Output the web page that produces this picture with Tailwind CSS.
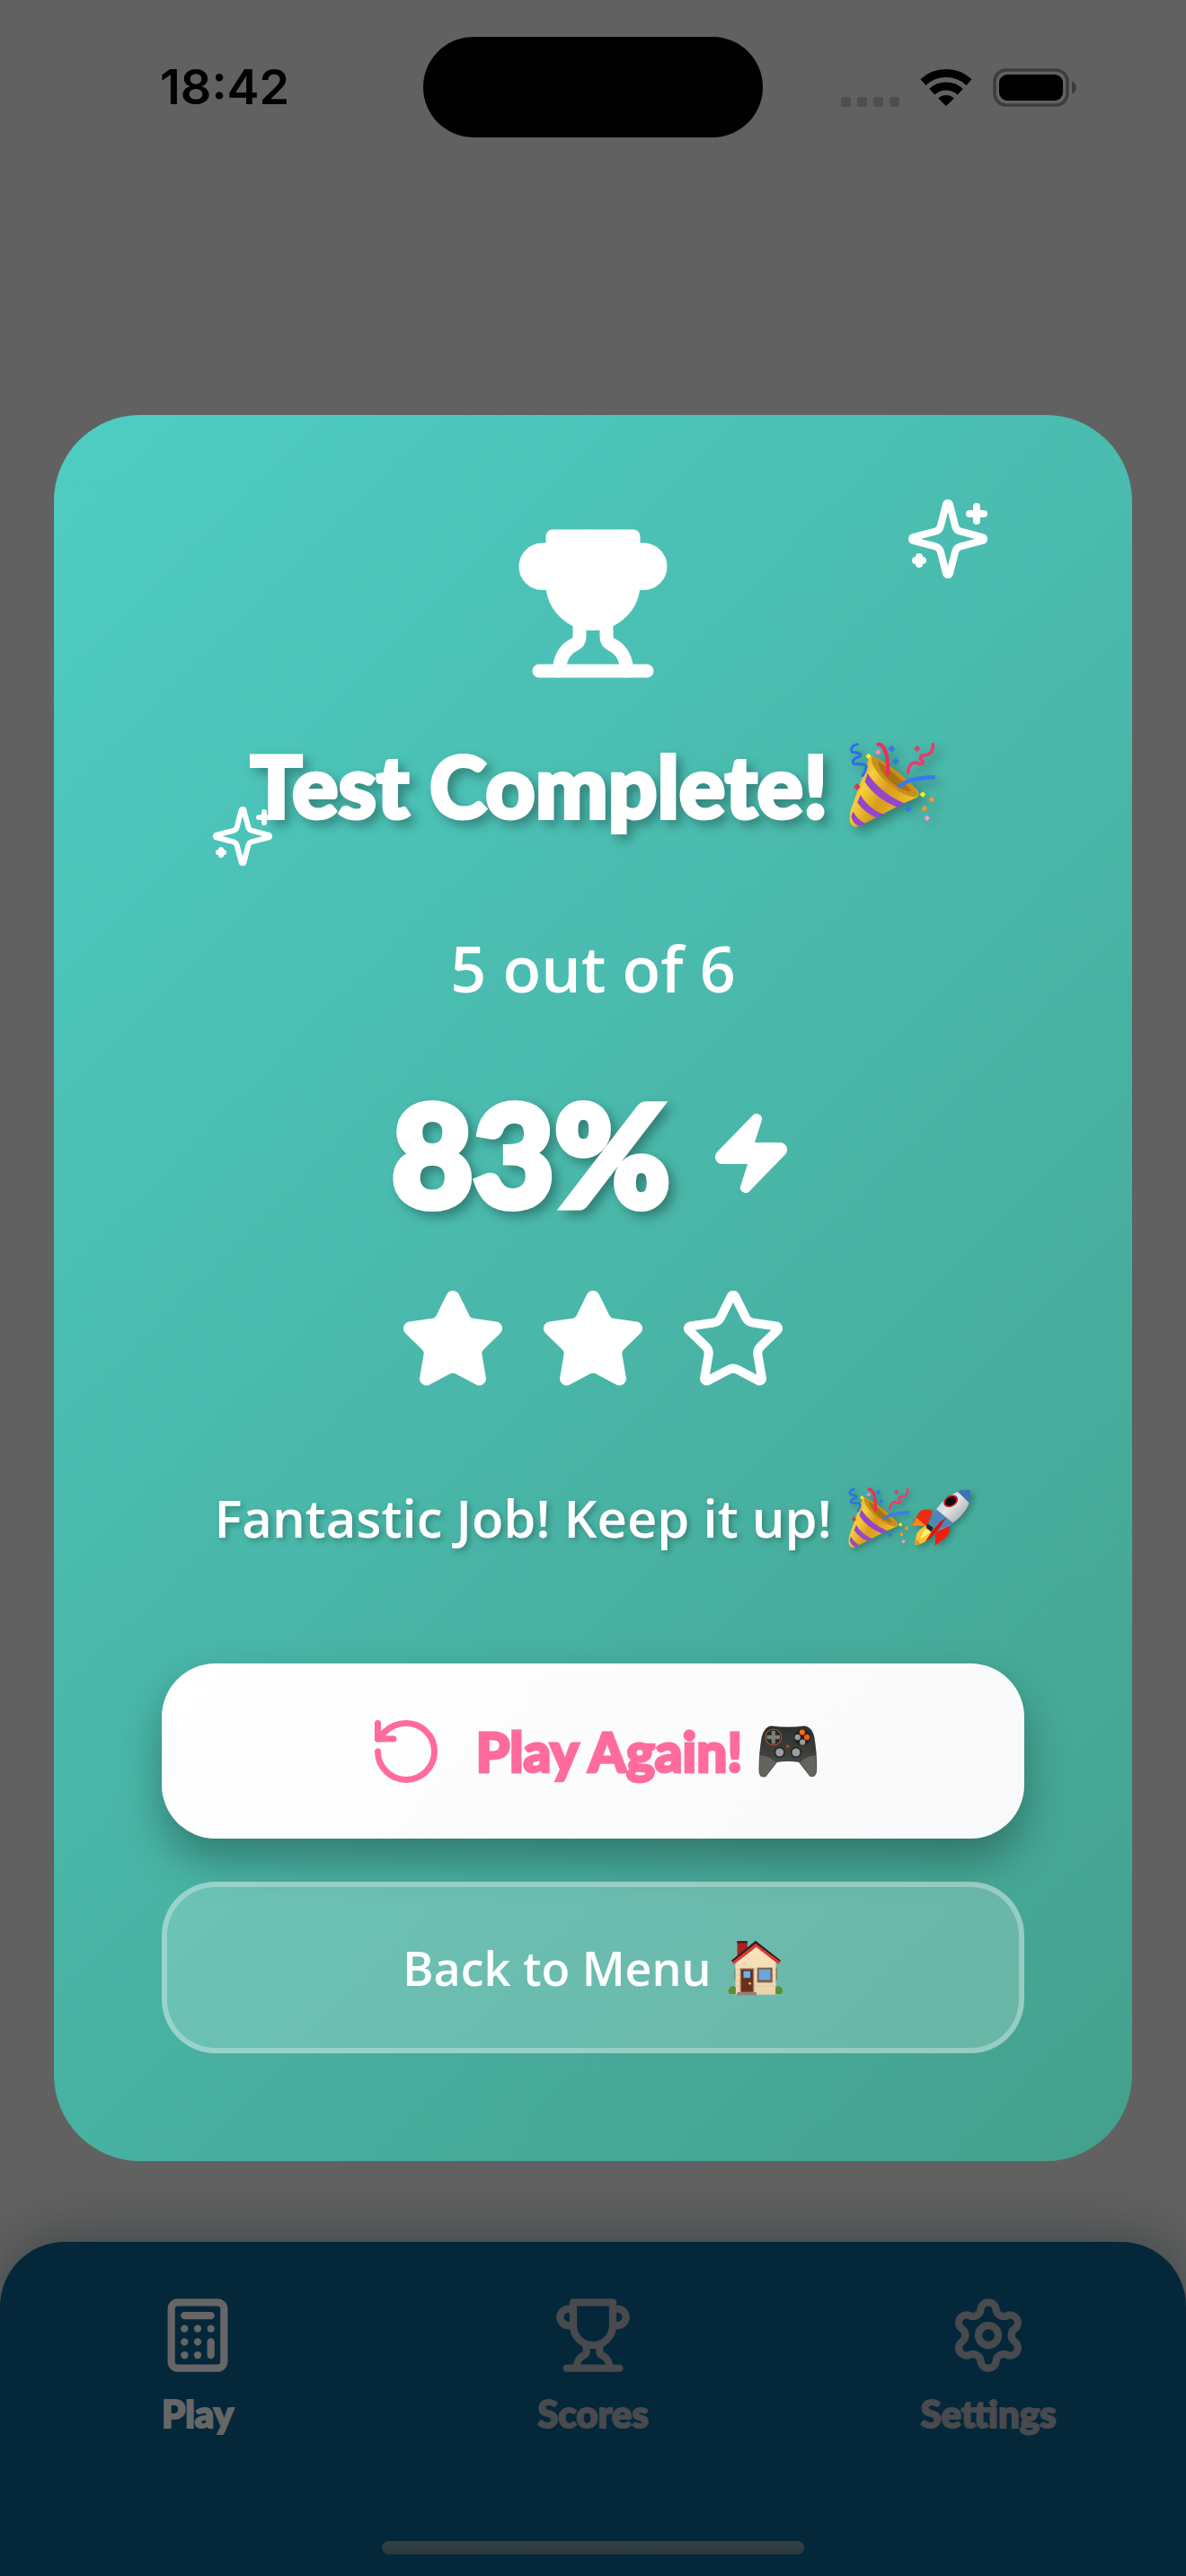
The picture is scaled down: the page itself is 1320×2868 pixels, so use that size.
<!DOCTYPE html>
<html lang="en">
<head>
<meta charset="utf-8">
<meta name="viewport" content="width=device-width, initial-scale=1">
<title>Test Complete</title>
<script src="https://cdn.jsdelivr.net/npm/@tailwindcss/browser@4"></script>
</head>
<body class="relative flex min-h-screen flex-col bg-[#f3f3f3] font-['Open_Sans',sans-serif]">

<!-- Shared symbols -->
<svg class="absolute size-0" aria-hidden="true">
  <defs>
    <linearGradient id="gold" x1="0" y1="0" x2="1" y2=".6"><stop offset="0" stop-color="#c98a12"/><stop offset=".35" stop-color="#f7cf3a"/><stop offset=".6" stop-color="#d99c1c"/><stop offset="1" stop-color="#f3c22e"/></linearGradient>
    <linearGradient id="steel" x1="0" y1="0" x2="1" y2="1"><stop offset="0" stop-color="#8fb4d8"/><stop offset=".45" stop-color="#e4e6e8"/><stop offset="1" stop-color="#7c8288"/></linearGradient>
    <linearGradient id="pad" x1="0" y1="0" x2="0" y2="1"><stop offset="0" stop-color="#2b302e"/><stop offset=".55" stop-color="#3d403c"/><stop offset="1" stop-color="#565852"/></linearGradient>
    <linearGradient id="wall" x1="0" y1="0" x2="0" y2="1"><stop offset="0" stop-color="#fde6bf"/><stop offset="1" stop-color="#ead3ac"/></linearGradient>
    <symbol id="trophy" viewBox="0 0 24 24">
      <path d="M6 9H4.500a2.500 2.500 0 0 1 0-5H6"/><path d="M18 9h1.500a2.500 2.500 0 0 0 0-5H18"/><path d="M4 22h16"/><path d="M10 14.660V17c0 .55-.47.98-.97 1.210C7.850 18.750 7 20.240 7 22"/><path d="M14 14.660V17c0 .55.47.98.97 1.210C16.150 18.750 17 20.240 17 22"/><path d="M18 2H6v7a6 6 0 0 0 12 0V2Z"/>
    </symbol>
    <symbol id="sparkles" viewBox="0 0 24 24">
      <path d="M9.937 15.500A2 2 0 0 0 8.500 14.063l-6.135-1.582a.5.5 0 0 1 0-.962L8.500 9.936A2 2 0 0 0 9.937 8.500l1.582-6.135a.5.5 0 0 1 .963 0L14.063 8.500A2 2 0 0 0 15.500 9.937l6.135 1.581a.5.5 0 0 1 0 .964L15.500 14.063a2 2 0 0 0-1.437 1.437l-1.582 6.135a.5.5 0 0 1-.963 0z"/><path d="M20 3v4M22 5h-4M4 17v2M5 18H3"/>
    </symbol>
    <symbol id="star" viewBox="0 0 24 24">
      <path d="M11.525 2.295a.53.53 0 0 1 .95 0l2.310 4.679a2.123 2.123 0 0 0 1.595 1.160l5.166.756a.53.53 0 0 1 .294.904l-3.736 3.638a2.123 2.123 0 0 0-.611 1.878l.882 5.140a.53.53 0 0 1-.771.56l-4.618-2.428a2.122 2.122 0 0 0-1.973 0L6.396 21.010a.53.53 0 0 1-.77-.56l.881-5.139a2.122 2.122 0 0 0-.611-1.879L2.160 9.795a.53.53 0 0 1 .294-.906l5.165-.755a2.122 2.122 0 0 0 1.597-1.160z"/>
    </symbol>
    <symbol id="party" viewBox="54 40 286 290">
      <path d="M56 312 Q50 295 60 262 L118 98 Q124 84 140 92 Q205 130 280 200 Q292 214 282 226 Q262 236 236 246 L90 322 Q66 334 56 312Z" fill="url(#gold)"/>
      <path d="M128 94 Q124 120 168 165 Q220 218 272 226 Q292 222 280 202 Q240 150 150 96 Q134 86 128 94Z" fill="#c98f1a"/>
      <path d="M150 104 Q215 150 262 205 Q240 212 196 178 Q150 138 150 104Z" fill="#a9740f"/>
      <path d="M114 146 Q160 215 238 246 L214 260 Q140 230 105 174Z" fill="#9447c8"/>
      <path d="M90 218 Q118 265 168 284 L144 296 Q102 276 80 244Z" fill="#9447c8"/>
      <path d="M66 274 Q80 302 106 314 L86 324 Q64 314 59 290Z" fill="#9447c8"/>
      <g fill="none" stroke-linecap="round">
        <path d="M150 48 Q184 50 182 148" stroke="#ee2d5c" stroke-width="13"/>
        <path d="M80 48 Q54 54 62 74 Q98 78 90 88 Q56 100 68 114 Q110 112 110 124 Q108 140 98 154" stroke="#2f6ce8" stroke-width="9"/>
        <path d="M334 48 Q336 74 318 82 Q284 86 294 98 Q308 114 290 114 Q256 98 250 142" stroke="#f0386c" stroke-width="11"/>
        <path d="M222 188 Q260 160 338 159" stroke="#3b78f0" stroke-width="14"/>
      </g>
      <g stroke="#333" stroke-opacity=".3">
        <path d="m117 78 11 10-10 11-11-11z" fill="#f6ec2a"/><path d="m300 206 10 11-10 10-11-10z" fill="#f6ec2a"/>
        <path d="m149 64 11 10-10 11-11-11z" fill="#ff8bb4"/><path d="m314 286 10 10-9 11-11-10z" fill="#ff9fc4"/>
        <path d="m195 52 12 11-11 12-12-12z" fill="#3478f0"/><path d="m209 94 11 12-11 11-11-11z" fill="#3478f0"/><path d="m251 254 11 10-10 12-11-11z" fill="#3478f0"/>
        <path d="m280 51 11 11-10 11-11-10z" fill="#f03a62"/><path d="m79 180 11 11-10 12-12-12z" fill="#e8304f"/>
        <path d="m330 223 10 11-10 11-11-11z" fill="#ff9a26"/><path d="m306 253 9 10-9 11-11-10z" fill="#ff9a26"/>
      </g>
    </symbol>
    <symbol id="rocket" viewBox="250 58 200 190">
      <path d="M322 130 Q300 120 280 130 Q262 154 252 178 L300 180Z" fill="#ee2a12"/><path d="M268 152 252 178 300 180Z" fill="#ff8a1c"/>
      <path d="M376 180 Q378 202 366 214 Q346 232 328 244 L332 192Z" fill="#f01d0c"/>
      <path d="M302 178 Q278 186 268 206 L262 240 Q274 244 300 228 Q322 212 326 196Z" fill="#ffc52e"/><path d="M304 186 Q286 196 280 220 Q300 214 316 196Z" fill="#fff07a"/><path d="M262 240 268 222 280 238Z" fill="#ff8a1c"/>
      <path d="M444 62 Q452 104 414 146 Q380 182 336 196 L312 170 Q322 124 366 88 Q406 58 444 62Z" fill="url(#steel)"/>
      <path d="M444 62 Q424 58 402 66 L440 104 Q450 82 444 62Z" fill="#3d76ae"/>
      <path d="M332 124 Q314 150 312 170 L336 196 Q362 186 388 170Z" fill="#4f86b9"/>
      <path d="m302 172 20 12-4 16-18-14z" fill="#20262c"/><path d="M364 152 Q326 178 296 232 Q334 208 364 152Z" fill="#dd1408"/>
      <ellipse cx="380" cy="98" rx="25" ry="18" transform="rotate(-30 380 98)" fill="#d4161b"/><ellipse cx="380" cy="98" rx="19" ry="13" transform="rotate(-30 380 98)" fill="#0c0c10"/>
    </symbol>
    <symbol id="gamepad" viewBox="1294 110 190 174">
      <path d="M1334 114 Q1388 122 1444 114 Q1468 120 1474 150 Q1484 210 1482 262 Q1476 284 1460 278 L1424 232 Q1388 226 1354 232 L1318 278 Q1298 286 1295 262 Q1294 210 1304 150 Q1312 118 1334 114Z" fill="url(#pad)"/>
      <path d="M1297 210 Q1325 208 1350 232 L1318 276 Q1300 284 1297 262ZM1480 210 Q1453 208 1428 232 L1460 276 Q1478 284 1480 262Z" fill="#63645e"/>
      <circle cx="1342" cy="151" r="26" fill="#262a29" stroke="#b7522a" stroke-width="3"/><path d="M1336 130h12v15h15v12h-15v15h-12v-15h-15v-12h15z" fill="#7b7e78"/>
      <circle cx="1435" cy="151" r="27" fill="#202423"/><circle cx="1435" cy="135" r="9" fill="#ff6a10"/><circle cx="1450" cy="151" r="9" fill="#ff5a08"/><circle cx="1420" cy="151" r="9" fill="#9a9d9b"/><circle cx="1436" cy="167" r="9" fill="#9a9d9b"/>
      <circle cx="1362" cy="200" r="18" fill="#232625"/><circle cx="1362" cy="200" r="13" fill="#9b9d9c"/><circle cx="1415" cy="200" r="18" fill="#232625"/><circle cx="1415" cy="200" r="13" fill="#9b9d9c"/>
      <circle cx="1388" cy="180" r="5" fill="#a84d1f"/>
    </symbol>
    <symbol id="house" viewBox="84 70 178 182">
      <path d="M113 74h33v50h-33z" fill="#a8241f"/><path d="M112 73h34v7h-34z" fill="#5e1512"/>
      <path d="M104 164h5v36h-5zM237 160h6v40h-6z" fill="#8c705c"/>
      <path d="M107 142 175 86l64 56v106H107z" fill="url(#wall)"/>
      <path d="M107 166h131M107 184h131M107 202h131M107 220h131" stroke="#d9be93" stroke-width="2"/>
      <path d="M94 137 173 72l82 65-7 12-73-56-73 56z" fill="#e0372e"/><path d="M94 137 173 72l82 65-3 3-79-59-76 60z" fill="#262223"/>
      <path d="M122 162h46v79h-46z" fill="#a27a5e"/><path d="M126 166h38v73h-38z" fill="#6b3020"/><path d="M132 170h25v25h-25z" fill="#6cb0e6" stroke="#43231a" stroke-width="2"/><circle cx="154" cy="212" r="4" fill="#f2c94c"/>
      <path d="M178 160h50v49h-50z" fill="#7b6250"/><path d="M184 166h37v34h-37z" fill="#6ba6da"/>
      <path d="M88 226q8-10 20-2v22H88q-8-8 0-20zM238 224q10-8 20 2q8 12-2 20h-18z" fill="#5f8f2c"/>
      <path d="M114 240h62v10h-66z" fill="#93807a"/>
    </symbol>
  </defs>
</svg>

<!-- Status bar -->
<header class="relative z-20 grid h-[194px] grid-cols-3 items-center">
  <time class="pl-[178px] font-['Inter',sans-serif] text-[54px] leading-none font-semibold text-black">18:42</time>
  <div class="h-28 w-[378px] justify-self-center rounded-full bg-black"></div>
  <div class="flex items-end justify-end gap-[23px] pr-[122px]">
    <div class="flex gap-[7px]">
      <span class="size-[11px] rounded-[3px] bg-[#4e4e4e]"></span><span class="size-[11px] rounded-[3px] bg-[#4e4e4e]"></span><span class="size-[11px] rounded-[3px] bg-[#4e4e4e]"></span><span class="size-[11px] rounded-[3px] bg-[#4e4e4e]"></span>
    </div>
    <svg class="h-[43px] w-[58px]" viewBox="0 0 58 43" fill="none" stroke="#000" stroke-width="9" role="img" aria-label="Wi-Fi">
      <path d="M3.500 15.600a37.500 37.500 0 0 1 51 0"/><path d="M13.300 26.200a23 23 0 0 1 31.400 0"/><path d="M29 42 20.200 33.500a13 13 0 0 1 17.600 0z" fill="#000" stroke="none"/>
    </svg>
    <svg class="h-[43px] w-[93px]" viewBox="0 0 93 43" role="img" aria-label="Battery full">
      <rect x="2" y="2" width="81" height="39" rx="13" fill="none" stroke="#3c3c3c" stroke-width="3.500"/><rect x="7" y="7" width="71" height="29" rx="9"/><path d="M88 14.500q5 2 5 7t-5 7z" fill="#3c3c3c"/>
    </svg>
  </div>
</header>

<main class="flex-1"></main>

<!-- Tab bar -->
<nav class="flex flex-col items-center rounded-t-[72px] bg-[#0a6191] pt-[60px] pb-6 font-['Lato',sans-serif] shadow-[0_-12px_60px_rgba(0,40,60,0.3)]">
  <div class="grid w-full grid-cols-3 text-[42px] leading-[48px] font-black">
    <a href="#play" class="flex flex-col items-center gap-[19px] text-white">
      <svg class="size-[88px]" viewBox="0 0 24 24" fill="none" stroke="currentColor" stroke-width="2.250" stroke-linecap="round" stroke-linejoin="round"><rect x="4" y="2" width="16" height="20" rx="2"/><path d="M8 6h8M16 14v4M16 10h.01M12 10h.01M8 10h.01M12 14h.01M8 14h.01M12 18h.01M8 18h.01"/></svg>
      <span class="[-webkit-text-stroke:2px_currentColor] [stroke-linejoin:round]">Play</span>
    </a>
    <a href="#scores" class="flex flex-col items-center gap-[19px] text-[#b4b9c3]">
      <svg class="size-[88px]" fill="none" stroke="currentColor" stroke-width="2.250" stroke-linecap="round" stroke-linejoin="round"><use href="#trophy"/></svg>
      <span class="[-webkit-text-stroke:2px_currentColor] [stroke-linejoin:round]">Scores</span>
    </a>
    <a href="#settings" class="flex flex-col items-center gap-[19px] text-[#b4b9c3]">
      <svg class="size-[88px]" viewBox="0 0 24 24" fill="none" stroke="currentColor" stroke-width="2.250" stroke-linecap="round" stroke-linejoin="round"><path d="M9.671 4.136a2.340 2.340 0 0 1 4.659 0 2.340 2.340 0 0 0 3.319 1.915 2.340 2.340 0 0 1 2.330 4.033 2.340 2.340 0 0 0 0 3.831 2.340 2.340 0 0 1-2.330 4.033 2.340 2.340 0 0 0-3.319 1.915 2.340 2.340 0 0 1-4.659 0 2.340 2.340 0 0 0-3.320-1.915 2.340 2.340 0 0 1-2.330-4.033 2.340 2.340 0 0 0 0-3.831A2.340 2.340 0 0 1 6.350 6.051a2.340 2.340 0 0 0 3.319-1.915"/><circle cx="12" cy="12" r="3"/></svg>
      <span class="[-webkit-text-stroke:2px_currentColor] [stroke-linejoin:round]">Settings</span>
    </a>
  </div>
  <div class="mt-[118px] h-[15px] w-[470px] rounded-full bg-linear-to-b from-[#849ead] to-[#6b8fa5]"></div>
</nav>

<!-- Result dialog -->
<div class="absolute inset-0 z-10 flex items-center justify-center bg-black/60 px-15">
  <section role="dialog" aria-labelledby="result-title" class="relative flex w-full flex-col items-center rounded-[96px] bg-[linear-gradient(135deg,#4ecdc4,#44a08d)] p-30 text-white">
    <svg class="absolute top-[90px] right-[157px] size-24" fill="none" stroke="currentColor" stroke-width="2" stroke-linecap="round" stroke-linejoin="round" aria-hidden="true"><use href="#sparkles"/></svg>
    <svg class="absolute top-[433px] left-[174px] size-18" fill="none" stroke="currentColor" stroke-width="2" stroke-linecap="round" stroke-linejoin="round" aria-hidden="true"><use href="#sparkles"/></svg>

    <svg class="size-[180px]" fill="currentColor" stroke="currentColor" stroke-width="2" stroke-linecap="round" stroke-linejoin="round" aria-hidden="true"><use href="#trophy"/></svg>

    <h1 id="result-title" class="mt-[52px] flex items-center gap-6 font-['Lato',sans-serif] text-[96px] leading-[120px] font-black whitespace-nowrap drop-shadow-[6px_6px_6px_rgba(0,0,0,0.3)]">
      <span class="[-webkit-text-stroke:4px_white] [stroke-linejoin:round]">Test Complete!</span>
      <svg class="size-24" role="img" aria-label="party popper"><use href="#party"/></svg>
    </h1>

    <p class="mt-[102px] text-[70px] leading-[84px] font-semibold">5 out of 6</p>

    <div class="mt-20 flex items-center gap-[42px]">
      <span class="font-['Lato',sans-serif] text-[156px] leading-[168px] font-black [-webkit-text-stroke:8px_white] [stroke-linejoin:round] drop-shadow-[6px_6px_6px_rgba(0,0,0,0.3)]">83%</span>
      <svg class="size-24" viewBox="0 0 24 24" fill="currentColor" stroke="currentColor" stroke-width="2" stroke-linecap="round" stroke-linejoin="round" aria-hidden="true"><path d="M4 14a1 1 0 0 1-.78-1.630l9.900-10.200a.5.5 0 0 1 .86.46l-1.920 6.020A1 1 0 0 0 13 10h7a1 1 0 0 1 .78 1.630l-9.900 10.200a.5.5 0 0 1-.86-.46l1.920-6.020A1 1 0 0 0 11 14z"/></svg>
    </div>

    <div class="mt-16 flex gap-9" role="img" aria-label="2 of 3 stars">
      <svg class="size-30" fill="currentColor" stroke="currentColor" stroke-width="2" stroke-linecap="round" stroke-linejoin="round"><use href="#star"/></svg>
      <svg class="size-30" fill="currentColor" stroke="currentColor" stroke-width="2" stroke-linecap="round" stroke-linejoin="round"><use href="#star"/></svg>
      <svg class="size-30" fill="none" stroke="currentColor" stroke-width="2" stroke-linecap="round" stroke-linejoin="round"><use href="#star"/></svg>
    </div>

    <p class="mt-24 flex items-center text-[58px] leading-[84px] font-semibold whitespace-nowrap drop-shadow-[3px_3px_3px_rgba(0,0,0,0.25)]">
      Fantastic Job! Keep it up!
      <svg class="ml-[18px] size-[68px]" role="img" aria-label="party popper"><use href="#party"/></svg>
      <svg class="ml-[2px] size-[68px]" role="img" aria-label="rocket"><use href="#rocket"/></svg>
    </p>

    <button type="button" class="mt-30 flex h-[195px] w-full items-center justify-center rounded-[60px] bg-[linear-gradient(135deg,#ffffff,#f8f9fa)] font-['Lato',sans-serif] text-[60px] leading-[84px] font-black text-[#ff6b9d] shadow-[0_24px_48px_rgba(0,0,0,0.3)]">
      <svg class="size-[84px]" viewBox="0 0 24 24" fill="none" stroke="currentColor" stroke-width="2" stroke-linecap="round" stroke-linejoin="round" aria-hidden="true"><path d="M3 12a9 9 0 1 0 9-9 9.750 9.750 0 0 0-6.740 2.740L3 8"/><path d="M3 3v5h5"/></svg>
      <span class="ml-9 [-webkit-text-stroke:3px_currentColor] [stroke-linejoin:round]">Play Again!</span>
      <svg class="ml-[18px] h-[60px] w-[66px]" role="img" aria-label="game controller"><use href="#gamepad"/></svg>
    </button>

    <button type="button" class="mt-12 flex h-[191px] w-full items-center justify-center gap-[18px] rounded-[60px] border-[6px] border-white/30 bg-white/20 text-[52px] leading-[72px] font-semibold text-white">
      Back to Menu
      <svg class="size-[62px]" role="img" aria-label="house"><use href="#house"/></svg>
    </button>
  </section>
</div>

</body>
</html>
